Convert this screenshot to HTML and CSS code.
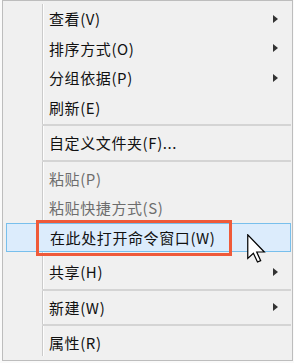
FILE: index.html
```html
<!DOCTYPE html>
<html lang="zh-CN">
<head>
  <meta charset="UTF-8">
  <title>右键菜单</title>
  <link rel="stylesheet" href="styles.css">
</head>
<body>

  <div class="menu">
    <ul class="list">
      <li class="item">查看(V)<span class="arrow"></span></li>
      <li class="item">排序方式(O)<span class="arrow"></span></li>
      <li class="item">分组依据(P)<span class="arrow"></span></li>
      <li class="item">刷新(E)</li>
      <li class="sep"></li>
      <li class="item">自定义文件夹(F)...</li>
      <li class="sep"></li>
      <li class="item disabled">粘贴(P)</li>
      <li class="item disabled">粘贴快捷方式(S)</li>
      <li class="item active">
        <span class="mark">在此处打开命令窗口(W)</span>
        <!-- mouse pointer -->
        <svg class="cursor" width="19" height="29" viewBox="0 0 12.5 19">
          <path d="M0.5 0.5 L0.5 16 L4.2 12.6 L6.9 18.4 L9 17.5 L6.4 11.8 L11.4 11.8 Z" fill="#fff" stroke="#000" stroke-width="0.8" stroke-linejoin="miter"/>
        </svg>
      </li>
      <li class="item">共享(H)<span class="arrow"></span></li>
      <li class="sep"></li>
      <li class="item">新建(W)<span class="arrow"></span></li>
      <li class="sep"></li>
      <li class="item">属性(R)</li>
    </ul>
  </div>

</body>
</html>
```

FILE: styles.css
```css
body {
  margin: 0;
  background-color: #fafafa;
  font-family: "Noto Sans CJK SC", "Noto Sans", sans-serif;
  font-size: 15px;
  color: #111;
}

.menu {
  width: 289px;
  height: 359px;
  margin-left: 2px;
  border: 1px solid #bdbdbd;
  background-color: #f0f0f0;
}

.list {
  list-style: none;
  margin: 3px 1px 0 2px;
  padding: 0;
  height: 352px;
  /* gutter line */
  background: linear-gradient(to right, transparent 37px, #cbcbcb 37px, #cbcbcb 38px, #fdfdfd 38px, #fdfdfd 39px, transparent 39px);
}

.item {
  display: flex;
  align-items: center;
  height: 29.5px;
  padding-left: 44px;
  letter-spacing: 0.6px;
  position: relative;
}

.item.disabled {
  color: #6d6d6d;
}

.item.active {
  margin-left: 1px;
  margin-bottom: 5px;
  padding-left: 43px;
  height: 27.5px;
  border: 1px solid #78bfec;
  background-color: #dcecfc;
}

.sep {
  height: 2px;
  margin: 2px 0 2px 37px;
  background-color: #d4d4d4;
}

.arrow {
  margin-left: auto;
  margin-right: 13px;
  width: 0;
  height: 0;
  border-left: 5px solid #333;
  border-top: 4px solid transparent;
  border-bottom: 4px solid transparent;
}

/* red call-out box drawn over the highlighted row */
.mark {
  position: relative;
}

.mark::before {
  content: "";
  position: absolute;
  left: -14px;
  top: -7px;
  right: -16px;
  bottom: -8px;
  border: 3px solid #ef5a3a;
}

.cursor {
  position: absolute;
  left: 240px;
  top: 10px;
}
```
